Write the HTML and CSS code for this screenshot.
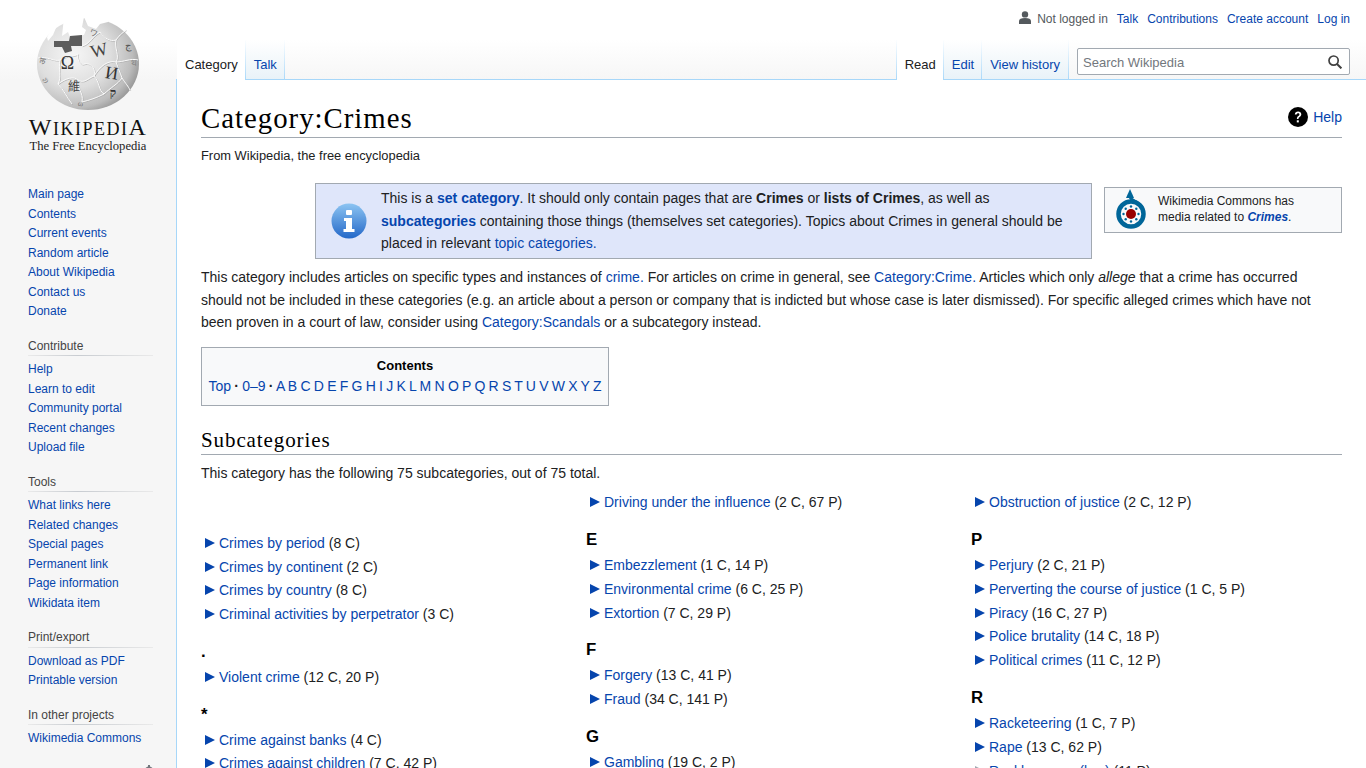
FILE: index.html
```html
<!DOCTYPE html>
<html lang="en">
<head>
  <meta charset="UTF-8" />
  <meta name="viewport" content="width=device-width, initial-scale=1.0"/>
  <title>Category:Crimes - Wikipedia</title>
  <link rel="stylesheet" href="styles.css">
</head>
<body>
<div class="page">
  <div class="sidebar">
    <div class="logo">
      <svg class="globe" width="102" height="92" viewBox="37 18 102 92">
        <defs>
          <radialGradient id="sphere" cx="36%" cy="40%" r="72%">
            <stop offset="0" stop-color="#f6f6f6"/>
            <stop offset="0.5" stop-color="#dedede"/>
            <stop offset="0.8" stop-color="#bcbcbc"/>
            <stop offset="1" stop-color="#868686"/>
          </radialGradient>
          <g id="seams" fill="none">
            <path d="M38 58 C48 56 54 62 60 60 C58 70 62 76 58 84 C64 90 66 96 72 104"/>
            <path d="M60 60 C68 54 72 58 78 54 C76 60 82 66 84 64 C92 62 96 70 94 76 C88 78 84 84 78 80 C74 76 66 78 58 84"/>
            <path d="M82 46 C90 44 92 36 100 32 C104 38 110 42 116 40 C114 48 120 56 116 62 C108 60 100 66 94 76"/>
            <path d="M116 62 C124 62 130 58 138 60"/>
            <path d="M94 76 C100 82 98 90 104 94 C110 88 118 84 122 78 C120 72 118 68 116 62"/>
            <path d="M78 80 C76 88 84 92 82 102 C90 100 96 98 104 94"/>
            <path d="M116 40 C120 34 124 32 126 30"/>
            <path d="M122 78 C126 84 128 86 130 90"/>
          </g>
        </defs>
        <ellipse cx="88" cy="64" rx="51" ry="46" fill="url(#sphere)"/>
        <path d="M64 17 L84 17 L82 27 L86 30 L84 35 L70 37 L68 32 L62 36 Z" fill="#fff"/>
        <path d="M84 17 L112 17 L108 22 L100 24 L96 29 L88 26 Z" fill="#fff"/>
        <path d="M47 37 L55 24 L58 23 L53 35 L48 41 Z" fill="#fff"/>
        <path d="M54 41 L69 41 L70 36 L82 35 L82 46 L71 46 L72 51 L65 53 L62 47 L54 47 Z" fill="#5c5c5c"/>
        <use href="#seams" stroke="#a8a8a8" stroke-width="0.7" transform="translate(0.7 0.7)"/>
        <use href="#seams" stroke="#fafafa" stroke-width="1"/>
        <g font-family="Liberation Serif, serif" text-anchor="middle">
          <text x="67.500" y="69" font-size="18" fill="#333">Ω</text>
          <text x="100.500" y="56" font-size="18" transform="rotate(-14 100.500 56)" fill="#444">W</text>
          <text x="111" y="79" font-size="18" transform="rotate(8 111 79)" fill="#333">И</text>
          <text x="113" y="97" font-size="12" font-weight="bold" fill="#333">ק</text>
          <text x="128" y="49" font-size="10" fill="#555">ج</text>
          <text x="134" y="66" font-size="9" fill="#888">थ</text>
          <text x="93" y="35" font-size="8" transform="rotate(20 93 35)" fill="#666">ワ</text>
          <text x="74" y="91" font-family="Noto Sans CJK TC, serif" font-size="12" fill="#444">維</text>
          <text x="46" y="62" font-size="9" transform="rotate(-80 46 62)" fill="#777">अ</text>
          <text x="47" y="82" font-size="9" transform="rotate(-30 47 82)" fill="#777">ಅ</text>
          <text x="80" y="106" font-size="8" transform="rotate(12 80 106)" fill="#777">ω</text>
        </g>
      </svg>
      <div class="wordmark"><span class="big">W</span>IKIPEDI<span class="big">A</span></div>
      <div class="tagline">The Free Encyclopedia</div>
    </div>

    <ul class="portal first">
      <li><a href="#">Main page</a></li>
      <li><a href="#">Contents</a></li>
      <li><a href="#">Current events</a></li>
      <li><a href="#">Random article</a></li>
      <li><a href="#">About Wikipedia</a></li>
      <li><a href="#">Contact us</a></li>
      <li><a href="#">Donate</a></li>
    </ul>

    <h3 class="portal-head">Contribute</h3>
    <ul class="portal">
      <li><a href="#">Help</a></li>
      <li><a href="#">Learn to edit</a></li>
      <li><a href="#">Community portal</a></li>
      <li><a href="#">Recent changes</a></li>
      <li><a href="#">Upload file</a></li>
    </ul>

    <h3 class="portal-head">Tools</h3>
    <ul class="portal">
      <li><a href="#">What links here</a></li>
      <li><a href="#">Related changes</a></li>
      <li><a href="#">Special pages</a></li>
      <li><a href="#">Permanent link</a></li>
      <li><a href="#">Page information</a></li>
      <li><a href="#">Wikidata item</a></li>
    </ul>

    <h3 class="portal-head">Print/export</h3>
    <ul class="portal">
      <li><a href="#">Download as PDF</a></li>
      <li><a href="#">Printable version</a></li>
    </ul>

    <h3 class="portal-head">In other projects</h3>
    <ul class="portal">
      <li><a href="#">Wikimedia Commons</a></li>
    </ul>

    <div class="lang-gear">
      <svg width="12" height="12" viewBox="0 0 12 12"><circle cx="6" cy="6" r="3.5" fill="none" stroke="#72777d" stroke-width="2"/><path d="M5 0h2v2H5zM5 10h2v2H5zM0 5h2v2H0zM10 5h2v2h-2z" fill="#72777d"/></svg>
    </div>
  </div>

  <div class="main">
    <div class="topbar">
      <div class="personal">
        <svg class="user-icon" width="12" height="13" viewBox="0 0 12 13"><circle cx="6" cy="3.4" r="3.2" fill="#54595d"/><path d="M0 13V10.2C0 8 2.2 6.9 6 6.9S12 8 12 10.2V13Z" fill="#54595d"/></svg>
        <span class="not-logged">Not logged in</span>
        <a href="#">Talk</a>
        <a href="#">Contributions</a>
        <a href="#">Create account</a>
        <a href="#">Log in</a>
      </div>
      <div class="navrow">
        <div class="tabs">
          <a class="tab selected tight" href="#">Category</a>
          <a class="tab tight" href="#">Talk</a>
        </div>
        <div class="tabs right">
          <a class="tab selected tight" href="#">Read</a>
          <a class="tab tight" href="#">Edit</a>
          <a class="tab" href="#">View history</a>
        </div>
        <div class="search">
          <span class="search-text">Search Wikipedia</span>
          <svg width="14" height="14" viewBox="0 0 14 14"><circle cx="5.6" cy="5.6" r="4.6" fill="none" stroke="#404040" stroke-width="1.7"/><path d="M9 9l4.4 4.4" stroke="#404040" stroke-width="2" fill="none"/></svg>
        </div>
      </div>
    </div>

    <div class="content">
      <div class="title-row">
        <h1>Category:Crimes</h1>
        <a class="help" href="#">
          <svg width="20" height="20" viewBox="0 0 20 20"><circle cx="10" cy="10" r="10" fill="#000"/><path d="M6.8 7.6C6.9 5.6 8.2 4.5 10.1 4.5c1.9 0 3.2 1.1 3.2 2.8 0 1.300-.7 2-1.700 2.700-.8.600-1.100 1-1.100 1.900H8.900c0-1.500.5-2.200 1.400-2.900.8-.6 1.100-1 1.100-1.600 0-.7-.5-1.200-1.300-1.200-.9 0-1.400.6-1.500 1.400z" fill="#fff"/><rect x="8.800" y="13.300" width="2" height="2.100" fill="#fff"/></svg>
          <span>Help</span>
        </a>
      </div>
      <div class="subtitle">From Wikipedia, the free encyclopedia</div>

      <div class="notices">
        <div class="ambox">
          <div class="ambox-icon">
            <svg width="36" height="36" viewBox="0 0 36 36">
              <defs>
                <linearGradient id="infoblue" x1="0" y1="0" x2="0" y2="1">
                  <stop offset="0" stop-color="#8cc4f2"/>
                  <stop offset="1" stop-color="#2468c8"/>
                </linearGradient>
              </defs>
              <circle cx="18" cy="18" r="17.500" fill="url(#infoblue)"/>
              <rect x="15" y="7" width="6" height="5" rx="1" fill="#fff"/>
              <path d="M13 15h8v11h2.500v3h-11v-3H15v-8h-2z" fill="#fff"/>
            </svg>
          </div>
          <div class="ambox-text">This is a <a href="#"><b>set category</b></a>. It should only contain pages that are <b>Crimes</b> or <b>lists of Crimes</b>, as well as <a href="#"><b>subcategories</b></a> containing those things (themselves set categories). Topics about Crimes in general should be placed in relevant <a href="#">topic categories.</a></div>
        </div>
        <div class="commons">
          <svg class="commons-logo" width="32" height="42" viewBox="0 0 32 42">
            <circle cx="16" cy="26" r="12.500" fill="none" stroke="#069" stroke-width="4.500"/>
            <path d="M15 8 C15 14 26 13 28 22" fill="none" stroke="#069" stroke-width="3.200"/>
            <path d="M15 1L19 10H11Z" fill="#069"/>
            <circle cx="16" cy="26" r="5" fill="#900"/>
            <g fill="#069">
              <circle cx="16" cy="18.500" r="1.200"/><circle cx="16" cy="33.500" r="1.200"/>
              <circle cx="8.500" cy="26" r="1.200"/><circle cx="23.500" cy="26" r="1.200"/>
              <circle cx="10.700" cy="20.700" r="1.200"/><circle cx="21.300" cy="20.700" r="1.200"/>
              <circle cx="10.700" cy="31.300" r="1.200"/><circle cx="21.300" cy="31.300" r="1.200"/>
            </g>
          </svg>
          <div class="commons-text">Wikimedia Commons has media related to <a href="#"><b><i>Crimes</i></b></a>.</div>
        </div>
      </div>

      <p class="intro">This category includes articles on specific types and instances of <a href="#">crime.</a> For articles on crime in general, see <a href="#">Category:Crime.</a> Articles which only <i>allege</i> that a crime has occurred should not be included in these categories (e.g. an article about a person or company that is indicted but whose case is later dismissed). For specific alleged crimes which have not been proven in a court of law, consider using <a href="#">Category:Scandals</a> or a subcategory instead.</p>

      <div class="toc">
        <div class="toc-title">Contents</div>
        <div class="toc-links"><a href="#">Top</a> <b>·</b> <a href="#">0–9</a> <b>·</b> <a href="#">A</a> <a href="#">B</a> <a href="#">C</a> <a href="#">D</a> <a href="#">E</a> <a href="#">F</a> <a href="#">G</a> <a href="#">H</a> <a href="#">I</a> <a href="#">J</a> <a href="#">K</a> <a href="#">L</a> <a href="#">M</a> <a href="#">N</a> <a href="#">O</a> <a href="#">P</a> <a href="#">Q</a> <a href="#">R</a> <a href="#">S</a> <a href="#">T</a> <a href="#">U</a> <a href="#">V</a> <a href="#">W</a> <a href="#">X</a> <a href="#">Y</a> <a href="#">Z</a></div>
      </div>

      <h2>Subcategories</h2>
      <p class="count">This category has the following 75 subcategories, out of 75 total.</p>

      <div class="columns">
        <div class="col first-col">
          <div class="item"><span class="arrow"></span><a href="#">Crimes by period</a>&nbsp;(8 C)</div>
          <div class="item"><span class="arrow"></span><a href="#">Crimes by continent</a>&nbsp;(2 C)</div>
          <div class="item"><span class="arrow"></span><a href="#">Crimes by country</a>&nbsp;(8 C)</div>
          <div class="item"><span class="arrow"></span><a href="#">Criminal activities by perpetrator</a>&nbsp;(3 C)</div>
          <h3>.</h3>
          <div class="item"><span class="arrow"></span><a href="#">Violent crime</a>&nbsp;(12 C, 20 P)</div>
          <h3>*</h3>
          <div class="item"><span class="arrow"></span><a href="#">Crime against banks</a>&nbsp;(4 C)</div>
          <div class="item"><span class="arrow"></span><a href="#">Crimes against children</a>&nbsp;(7 C, 42 P)</div>
        </div>
        <div class="col">
          <div class="item"><span class="arrow"></span><a href="#">Driving under the influence</a>&nbsp;(2 C, 67 P)</div>
          <h3>E</h3>
          <div class="item"><span class="arrow"></span><a href="#">Embezzlement</a>&nbsp;(1 C, 14 P)</div>
          <div class="item"><span class="arrow"></span><a href="#">Environmental crime</a>&nbsp;(6 C, 25 P)</div>
          <div class="item"><span class="arrow"></span><a href="#">Extortion</a>&nbsp;(7 C, 29 P)</div>
          <h3>F</h3>
          <div class="item"><span class="arrow"></span><a href="#">Forgery</a>&nbsp;(13 C, 41 P)</div>
          <div class="item"><span class="arrow"></span><a href="#">Fraud</a>&nbsp;(34 C, 141 P)</div>
          <h3>G</h3>
          <div class="item"><span class="arrow"></span><a href="#">Gambling</a>&nbsp;(19 C, 2 P)</div>
        </div>
        <div class="col">
          <div class="item"><span class="arrow"></span><a href="#">Obstruction of justice</a>&nbsp;(2 C, 12 P)</div>
          <h3>P</h3>
          <div class="item"><span class="arrow"></span><a href="#">Perjury</a>&nbsp;(2 C, 21 P)</div>
          <div class="item"><span class="arrow"></span><a href="#">Perverting the course of justice</a>&nbsp;(1 C, 5 P)</div>
          <div class="item"><span class="arrow"></span><a href="#">Piracy</a>&nbsp;(16 C, 27 P)</div>
          <div class="item"><span class="arrow"></span><a href="#">Police brutality</a>&nbsp;(14 C, 18 P)</div>
          <div class="item"><span class="arrow"></span><a href="#">Political crimes</a>&nbsp;(11 C, 12 P)</div>
          <h3>R</h3>
          <div class="item"><span class="arrow"></span><a href="#">Racketeering</a>&nbsp;(1 C, 7 P)</div>
          <div class="item"><span class="arrow"></span><a href="#">Rape</a>&nbsp;(13 C, 62 P)</div>
          <div class="item"><span class="arrow empty"></span><a href="#">Recklessness (law)</a>&nbsp;(11 P)</div>
        </div>
      </div>
    </div>
  </div>
</div>
</body>
</html>
```

FILE: styles.css
```css
html, body {
  margin: 0;
  height: 768px;
  overflow: hidden;
}
body {
  font-family: "Liberation Sans", Arial, sans-serif;
  color: #202122;
  background: linear-gradient(#fff 40px, #f6f6f6 80px) no-repeat #f6f6f6;
}
a {
  color: #0645ad;
  text-decoration: none;
}
.page {
  display: flex;
}

/* sidebar */
.sidebar {
  width: 176px;
  flex: none;
  font-size: 12px;
}
.logo {
  height: 185px;
  box-sizing: border-box;
  padding-top: 18px;
  text-align: center;
}
.globe {
  display: block;
  margin: 0 auto;
}
.wordmark {
  font-family: "Liberation Serif", serif;
  font-size: 18px;
  line-height: 20px;
  letter-spacing: 1.5px;
  color: #111;
  margin-top: 7px;
}
.wordmark .big {
  font-size: 24px;
}
.tagline {
  font-family: "Liberation Serif", serif;
  font-size: 12.6px;
  line-height: 16px;
  color: #222;
  margin-top: -1px;
}
.portal {
  list-style: none;
  margin: 0;
  padding: 0 0 0 28px;
}
.portal li {
  line-height: 19.5px;
  white-space: nowrap;
}
.portal-head {
  margin: 15px 23px 0 28px;
  font-size: 12px;
  font-weight: normal;
  line-height: 18.5px;
  color: #444;
  border-bottom: 1px solid;
  border-image: linear-gradient(to right, #eaeaea, #c8ccd1 40%, #eaeaea) 1;
}
.portal-head + .portal {
  padding-top: 4px;
}
.lang-gear {
  display: flex;
  justify-content: flex-end;
  padding: 16px 21px 0 0;
}

/* header */
.main {
  flex: 1;
  min-width: 0;
}
.topbar {
  height: 80px;
  position: relative;
  z-index: 1;
}
.personal {
  height: 40px;
  box-sizing: border-box;
  padding: 11px 16px 0 0;
  display: flex;
  justify-content: flex-end;
  gap: 9px;
  font-size: 12px;
  line-height: 17px;
}
.user-icon {
  margin: 0 -3px 0 0;
}
.not-logged {
  color: #54595d;
}
.navrow {
  height: 40px;
  display: flex;
  align-items: flex-end;
}
.tabs {
  display: flex;
  height: 40px;
  margin-left: 1px;
}
.tabs.right {
  margin-left: auto;
  border-left: 1px solid transparent;
  border-image: linear-gradient(#fff, #a7d7f9) 1;
}
.tab {
  padding: 17px 8px 0;
  font-size: 13px;
  line-height: 16px;
  border-right: 1px solid;
  border-image: linear-gradient(#fff, #a7d7f9) 1;
  background: linear-gradient(#fff, #e8f2f8);
  box-shadow: inset 0 -1px 0 #a7d7f9;
}
.tab.tight {
  padding-right: 7px;
}
.tab.selected {
  background: #fff;
  color: #202122;
  box-shadow: none;
}
.search {
  width: 273px;
  height: 27px;
  box-sizing: border-box;
  margin: 0 16px 5px 8px;
  padding: 0 7px 0 5px;
  display: flex;
  align-items: center;
  justify-content: space-between;
  background: #fff;
  border: 1px solid #a2a9b1;
  border-radius: 2px;
  font-size: 13px;
}
.search-text {
  color: #72777d;
  padding-top: 1px;
}

/* content */
.content {
  margin-top: -1px;
  height: 700px;
  box-sizing: border-box;
  padding: 20px 24px 0;
  background: #fff;
  border-top: 1px solid #a7d7f9;
  border-left: 1px solid #a7d7f9;
  font-size: 14px;
  line-height: 22.4px;
}
.title-row {
  display: flex;
  justify-content: space-between;
  align-items: center;
  border-bottom: 1px solid #a2a9b1;
}
h1 {
  margin: 0;
  font-family: "Liberation Serif", serif;
  font-size: 28.8px;
  font-weight: normal;
  line-height: 36.5px;
  letter-spacing: 1px;
  color: #000;
}
.help {
  display: flex;
  align-items: center;
  gap: 5px;
  margin-bottom: 2px;
}
.subtitle {
  margin-top: 8px;
  font-size: 12.88px;
  line-height: 20.6px;
}
.notices {
  display: flex;
  justify-content: flex-end;
  align-items: flex-start;
  gap: 12px;
  margin-top: 17px;
}
.ambox {
  width: 777px;
  height: 76px;
  box-sizing: border-box;
  display: flex;
  align-items: center;
  background: #dfe6fa;
  border: 1px solid #a2a9b1;
}
.ambox-icon {
  width: 65px;
  flex: none;
  display: flex;
  justify-content: center;
}
.ambox-text {
  padding-right: 24px;
}
.commons {
  width: 238px;
  height: 46px;
  box-sizing: border-box;
  margin-top: 4px;
  padding: 0 36px 0 10px;
  display: flex;
  align-items: center;
  gap: 11px;
  background: #f8f9fa;
  border: 1px solid #a2a9b1;
  font-size: 12px;
  line-height: 16px;
}
.commons-logo {
  flex: none;
  margin-top: -2px;
}
.commons-text {
  margin-top: -2px;
}
.intro {
  margin: 7px 0 0;
}
.toc {
  width: 408px;
  height: 59px;
  box-sizing: border-box;
  margin-top: 14px;
  padding-top: 8px;
  background: #f8f9fa;
  border: 1px solid #a2a9b1;
  text-align: center;
}
.toc-title {
  font-size: 13px;
  font-weight: bold;
  line-height: 20px;
  color: #000;
}
.toc-links {
  line-height: 21px;
  word-spacing: -0.65px;
  white-space: nowrap;
}
h2 {
  margin: 21px 0 0;
  font-family: "Liberation Serif", serif;
  font-size: 21px;
  font-weight: normal;
  line-height: 26.6px;
  letter-spacing: 0.9px;
  color: #000;
  border-bottom: 1px solid #a2a9b1;
}
.count {
  margin: 7px 0 0;
}
.columns {
  display: grid;
  grid-template-columns: repeat(3, 1fr);
  gap: 14px;
  margin-top: 7px;
}
.first-col {
  padding-top: 40.4px;
}
.item {
  height: 23.8px;
  padding-left: 4px;
  white-space: nowrap;
}
.arrow {
  display: inline-block;
  width: 0;
  height: 0;
  margin-right: 4px;
  border-left: 10px solid #0645ad;
  border-top: 5px solid transparent;
  border-bottom: 5px solid transparent;
}
.arrow.empty {
  border-left-color: #a2a9b1;
}
.col h3 {
  margin: 0;
  padding: 14px 0 3.2px;
  font-size: 16.8px;
  line-height: 21.8px;
  color: #000;
}
```
